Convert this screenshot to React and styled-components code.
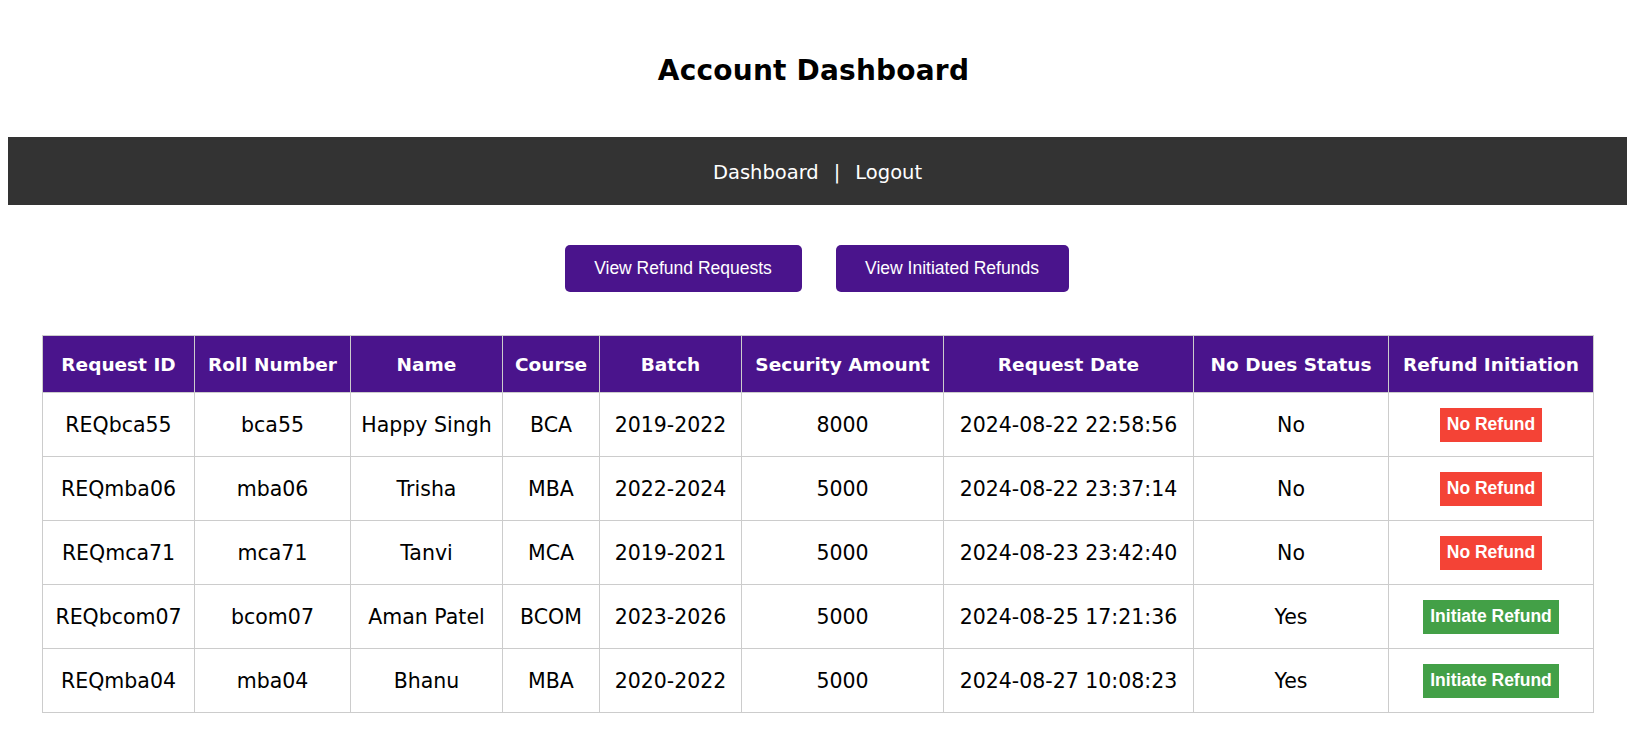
import React from "react";
import styled, { createGlobalStyle } from "styled-components";

const GlobalStyle = createGlobalStyle`
  html, body {
    margin: 0;
    padding: 0;
    background: #ffffff;
    overflow-x: hidden;
  }
  body {
    font-family: "Comic Sans MS", "DejaVu Sans", sans-serif;
    color: #000;
  }
`;

const Page = styled.div`
  width: 1627px;
  padding-bottom: 20px;
`;

const Title = styled.h1`
  margin: 0;
  height: 137px;
  display: flex;
  align-items: center;
  justify-content: center;
  padding-top: 4px;
  box-sizing: border-box;
  font-size: 28px;
  font-weight: bold;
  letter-spacing: 0.2px;
`;

const Nav = styled.nav`
  margin-left: 8px;
  height: 68px;
  background: #333333;
  display: flex;
  align-items: center;
  justify-content: center;
  gap: 15px;
  color: #ffffff;
  font-size: 19.5px;
  padding-top: 2px;
  box-sizing: border-box;
`;

const NavLink = styled.a`
  color: #ffffff;
  text-decoration: none;
`;

const Sep = styled.span`
  color: #ffffff;
`;

const ButtonRow = styled.div`
  display: flex;
  justify-content: center;
  gap: 34px;
  padding-top: 40px;
  padding-left: 6px;
`;

const ActionButton = styled.button`
  width: ${(p) => p.$w}px;
  height: 47px;
  background: #4a148c;
  color: #ffffff;
  border: none;
  border-radius: 5px;
  font-family: "Liberation Sans", Arial, sans-serif;
  font-size: 17.5px;
  cursor: pointer;
`;

const Table = styled.table`
  margin: 43px 0 0 42px;
  width: 1551px;
  border-collapse: collapse;
  table-layout: fixed;
`;

const HeadCell = styled.th`
  background: #4a148c;
  color: #ffffff;
  font-weight: bold;
  font-size: 18.5px;
  height: 57px;
  padding: 0 4px;
  border: 1px solid #cccccc;
  text-align: center;
  white-space: nowrap;
  box-sizing: border-box;
`;

const Cell = styled.td`
  font-size: 20.5px;
  height: 64px;
  padding: 0 4px;
  border: 1px solid #cccccc;
  text-align: center;
  white-space: nowrap;
  box-sizing: border-box;
`;

const Badge = styled.button`
  background: ${(p) => (p.$ok ? "#43a047" : "#f44336")};
  color: #ffffff;
  border: none;
  border-radius: 0;
  font-family: "Liberation Sans", Arial, sans-serif;
  font-weight: bold;
  font-size: 17.5px;
  height: 34px;
  padding: 0 7px;
  cursor: pointer;
`;

const columns = [
  { label: "Request ID", w: 152 },
  { label: "Roll Number", w: 156 },
  { label: "Name", w: 152 },
  { label: "Course", w: 97 },
  { label: "Batch", w: 142 },
  { label: "Security Amount", w: 202 },
  { label: "Request Date", w: 250 },
  { label: "No Dues Status", w: 195 },
  { label: "Refund Initiation", w: 205 },
];

const rows = [
  ["REQbca55", "bca55", "Happy Singh", "BCA", "2019-2022", "8000", "2024-08-22 22:58:56", "No"],
  ["REQmba06", "mba06", "Trisha", "MBA", "2022-2024", "5000", "2024-08-22 23:37:14", "No"],
  ["REQmca71", "mca71", "Tanvi", "MCA", "2019-2021", "5000", "2024-08-23 23:42:40", "No"],
  ["REQbcom07", "bcom07", "Aman Patel", "BCOM", "2023-2026", "5000", "2024-08-25 17:21:36", "Yes"],
  ["REQmba04", "mba04", "Bhanu", "MBA", "2020-2022", "5000", "2024-08-27 10:08:23", "Yes"],
];

export default function App() {
  return (
    <Page>
      <GlobalStyle />
      <Title>Account Dashboard</Title>
      <Nav>
        <NavLink href="#">Dashboard</NavLink>
        <Sep>|</Sep>
        <NavLink href="#">Logout</NavLink>
      </Nav>
      <ButtonRow>
        <ActionButton $w={237}>View Refund Requests</ActionButton>
        <ActionButton $w={233}>View Initiated Refunds</ActionButton>
      </ButtonRow>
      <Table>
        <colgroup>
          {columns.map((c) => (
            <col key={c.label} style={{ width: c.w }} />
          ))}
        </colgroup>
        <thead>
          <tr>
            {columns.map((c) => (
              <HeadCell key={c.label}>{c.label}</HeadCell>
            ))}
          </tr>
        </thead>
        <tbody>
          {rows.map((r) => (
            <tr key={r[0]}>
              {r.map((v, i) => (
                <Cell key={i}>{v}</Cell>
              ))}
              <Cell>
                {r[7] === "Yes" ? (
                  <Badge $ok>Initiate Refund</Badge>
                ) : (
                  <Badge>No Refund</Badge>
                )}
              </Cell>
            </tr>
          ))}
        </tbody>
      </Table>
    </Page>
  );
}
